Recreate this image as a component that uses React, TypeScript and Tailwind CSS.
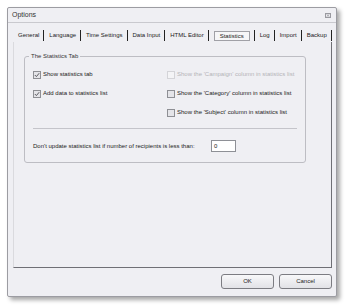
const tabs = ["General", "Language", "Time Settings", "Data Input", "HTML Editor", "Statistics", "Log", "Import", "Backup"];

function Check({ checked, disabled }: { checked?: boolean; disabled?: boolean }) {
  return (
    <span
      className={`flex h-[8px] w-[8px] shrink-0 items-center justify-center border ${
        disabled ? "border-[#d4d4d8] bg-[#f4f4f6]" : "border-[#8e8f94] bg-[#e4e4e8]"
      }`}
    >
      {checked && (
        <svg width="6" height="6" viewBox="0 0 6 6">
          <path d="M0.8 3 L2.4 4.6 L5.2 1.2" fill="none" stroke="#5a5a60" strokeWidth="1" />
        </svg>
      )}
    </span>
  );
}

function Row({ label, checked, disabled }: { label: string; checked?: boolean; disabled?: boolean }) {
  return (
    <div className="flex h-[19px] items-center gap-[2px]">
      <Check checked={checked} disabled={disabled} />
      <span className={disabled ? "text-[#b4b4b8]" : "text-[#222]"}>{label}</span>
    </div>
  );
}

export default function App() {
  return (
    <div
      className="h-[307px] w-[350px] bg-white pl-[7px] pt-[7px] text-[6px] text-[#222]"
      style={{ fontFamily: '"Liberation Sans", Arial, sans-serif' }}
    >
      <div className="flex h-[290px] w-[330px] flex-col rounded-[2px] border border-[#9c9ca2] bg-[#efeff3] shadow-[3px_3px_4px_rgba(0,0,0,0.35)]">
        {/* title bar */}
        <div className="flex h-[15px] items-center justify-between border-b border-[#c9c9ce] pl-[4px] pr-[5px]">
          <span className="text-[7px] text-[#333]">Options</span>
          <svg width="6" height="5" viewBox="0 0 6 5">
            <rect x="0.5" y="0.5" width="5" height="4" fill="none" stroke="#9a9aa0" strokeWidth="1" />
            <path d="M1.5 1.2 L4.5 3.8 M4.5 1.2 L1.5 3.8" stroke="#9a9aa0" strokeWidth="0.8" />
          </svg>
        </div>

        {/* tabs */}
        <div className="ml-[5px] mt-[7px] flex h-[11px] items-stretch">
          {tabs.map((t) => (
            <div key={t} className="flex items-center border-r border-[#222] pl-[5px] pr-[4px]">
              {t === "Statistics" ? (
                <span className="border border-[#a0a0a6] bg-[#f6f6f8] px-[5px] leading-[8px]">{t}</span>
              ) : (
                <span>{t}</span>
              )}
            </div>
          ))}
        </div>

        {/* tab panel */}
        <div className="ml-[5px] mr-[4px] mt-[1px] flex h-[226px] flex-col border-b border-l border-r border-b-[#6f6f75] border-l-[#dadade] border-r-[#6f6f75] px-[10px] pt-[10px]">
          <fieldset className="h-[111px] w-[282px] rounded-[3px] border border-[#bdbdc3] px-[8px] pt-[4px]">
            <legend className="ml-[-4px] px-[2px] text-[#333]">The Statistics Tab</legend>
            <div className="flex">
              <div className="w-[134px]">
                <Row label="Show statistics tab" checked />
                <Row label="Add data to statistics list" checked />
              </div>
              <div>
                <Row label="Show the 'Campaign' column in statistics list" disabled />
                <Row label="Show the 'Category' column in statistics list" />
                <Row label="Show the 'Subject' column in statistics list" />
              </div>
            </div>
            <div className="mt-[6px] border-t border-[#c4c4ca]" />
            <div className="mt-[11px] flex items-center">
              <span className="w-[178px]">Don't update statistics list if number of recipients is less than:</span>
              <div className="flex h-[12px] w-[25px] items-center border border-[#8e9096] bg-white pl-[2px]">0</div>
            </div>
          </fieldset>
        </div>

        {/* buttons */}
        <div className="mr-[4px] mt-[6px] flex justify-end gap-[5px]">
          <button className="h-[15px] w-[53px] rounded-[3px] border border-[#7c7c82] bg-gradient-to-b from-[#f8f8fa] to-[#e2e2e6] text-[6px]">OK</button>
          <button className="h-[15px] w-[53px] rounded-[3px] border border-[#7c7c82] bg-gradient-to-b from-[#f8f8fa] to-[#e2e2e6] text-[6px]">Cancel</button>
        </div>
      </div>
    </div>
  );
}
